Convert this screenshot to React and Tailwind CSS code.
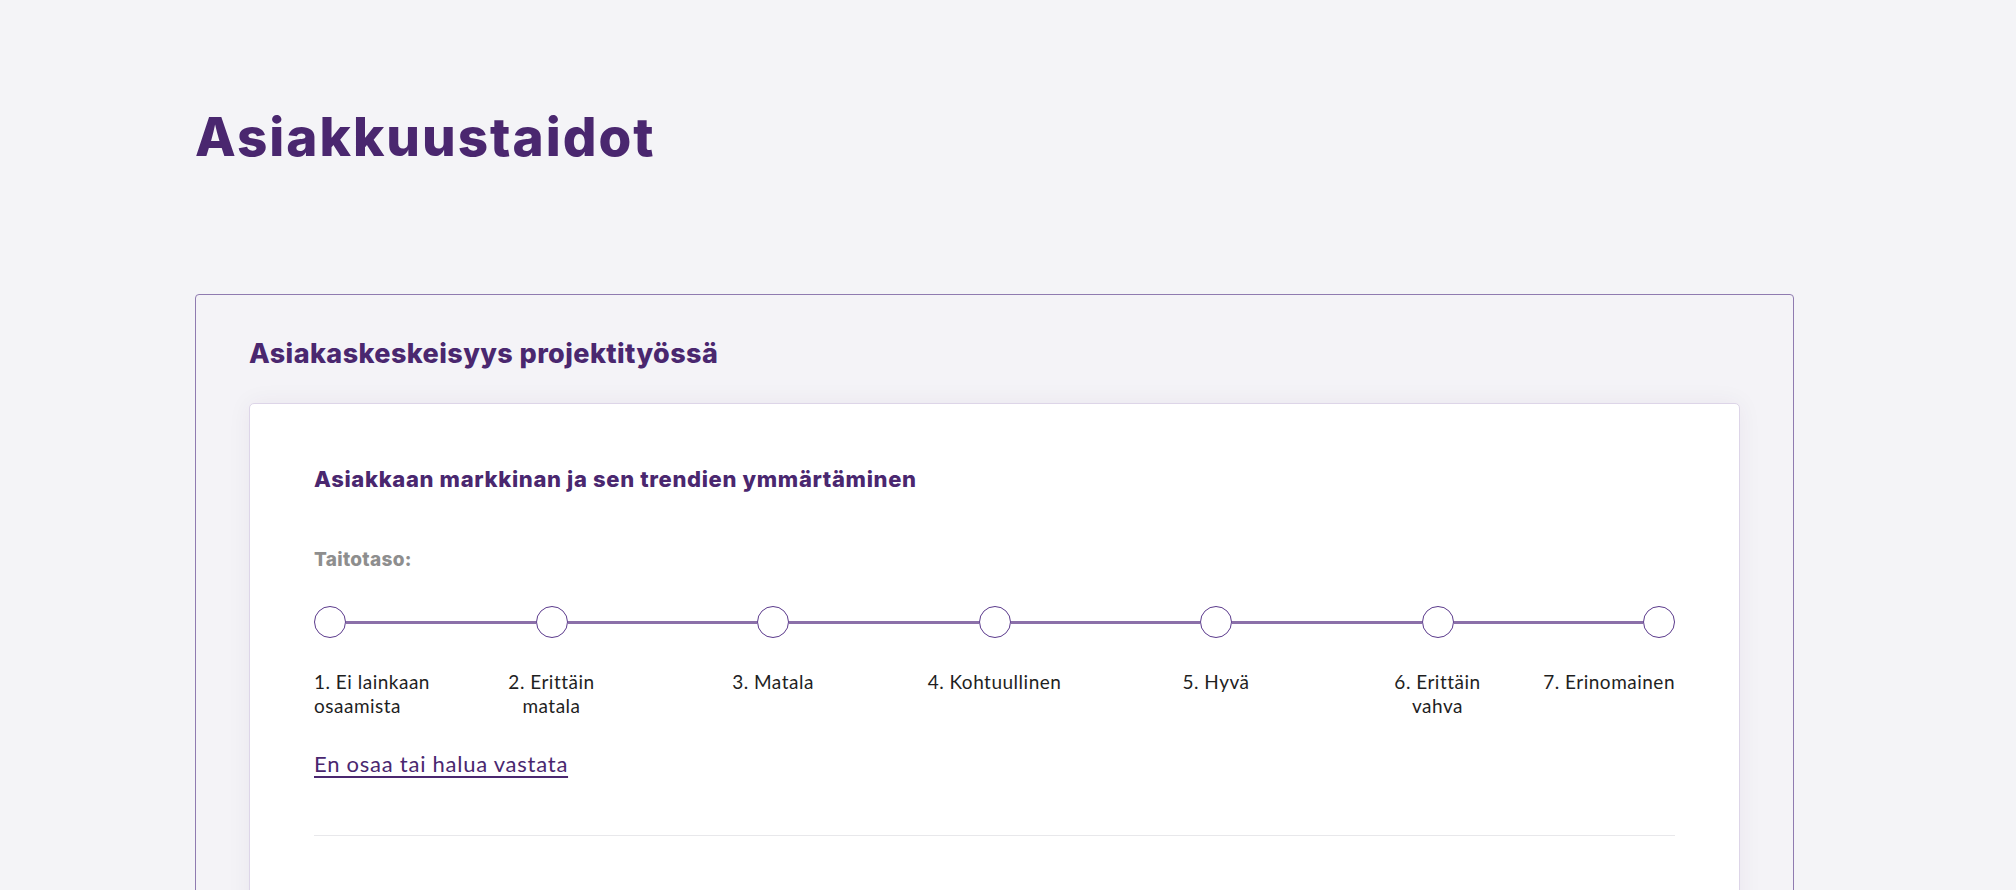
import React from "react";

const levels = [
  { lines: ["1. Ei lainkaan", "osaamista"], align: "start" },
  { lines: ["2. Erittäin", "matala"], align: "center" },
  { lines: ["3. Matala"], align: "center" },
  { lines: ["4. Kohtuullinen"], align: "center" },
  { lines: ["5. Hyvä"], align: "center" },
  { lines: ["6. Erittäin", "vahva"], align: "center" },
  { lines: ["7. Erinomainen"], align: "end" },
];

const head = { fontFamily: "Inter, 'Noto Sans', sans-serif" };
const body = { fontFamily: "Lato, 'Open Sans', sans-serif" };

function Level({ level }) {
  const itemCls =
    level.align === "start"
      ? "items-start text-left"
      : level.align === "end"
      ? "items-end text-right"
      : "items-center text-center";
  return (
    <div className={`flex w-8 shrink-0 flex-col ${itemCls}`}>
      <button
        type="button"
        className="h-8 w-8 rounded-full border border-[#5b3a8c] bg-white"
      />
      <div
        className="mt-[32px] whitespace-nowrap text-[19px] leading-[24px] tracking-[0.5px] text-[#1f1f1f]"
        style={body}
      >
        {level.lines.map((l, i) => (
          <div key={i}>{l}</div>
        ))}
      </div>
    </div>
  );
}

export default function App() {
  return (
    <div className="min-h-screen bg-[#f4f4f7] pl-[195px] pr-[222px] pb-10">
      <h1
        className="pt-[111px] text-[53px] font-extrabold leading-[52px] tracking-[2px] text-[#4a276f]"
        style={head}
      >
        Asiakkuustaidot
      </h1>
      <div className="mt-[131px] rounded-[4px] border border-[#8f7bb0] bg-[#f4f3f7] px-[53px] pt-[42px] pb-10">
        <h2
          className="text-[27px] font-extrabold leading-[34px] tracking-[0.4px] text-[#4a276f]"
          style={head}
        >
          Asiakaskeskeisyys projektityössä
        </h2>
        <div className="mt-[32px] rounded-[5px] border border-[#ddd5e8] bg-white px-16 pt-[61px] pb-16 shadow-[0_0_24px_rgba(60,40,90,0.06)]">
          <h3
            className="text-[22px] font-extrabold leading-[28px] tracking-[0.65px] text-[#4a276f]"
            style={head}
          >
            Asiakkaan markkinan ja sen trendien ymmärtäminen
          </h3>
          <div
            className="mt-[55px] text-[19px] font-extrabold leading-[24px] tracking-[0.3px] text-[#8e8e8e]"
            style={head}
          >
            Taitotaso:
          </div>
          <div className="mt-[34px] flex items-start">
            {levels.map((lv, i) => (
              <React.Fragment key={i}>
                {i > 0 && (
                  <div className="mt-[14.5px] h-[3px] flex-1 bg-[#8b70a9]" />
                )}
                <Level level={lv} />
              </React.Fragment>
            ))}
          </div>
          <a
            href="#"
            className="mt-[34px] inline-block text-[22px] leading-[24px] tracking-[0.75px] text-[#4a276f] underline decoration-[2px] underline-offset-[4px]"
            style={body}
          >
            En osaa tai halua vastata
          </a>
          <div className="mt-[57px] h-px bg-[#e8e8eb]" />
          <div className="h-[200px]" />
        </div>
      </div>
    </div>
  );
}
